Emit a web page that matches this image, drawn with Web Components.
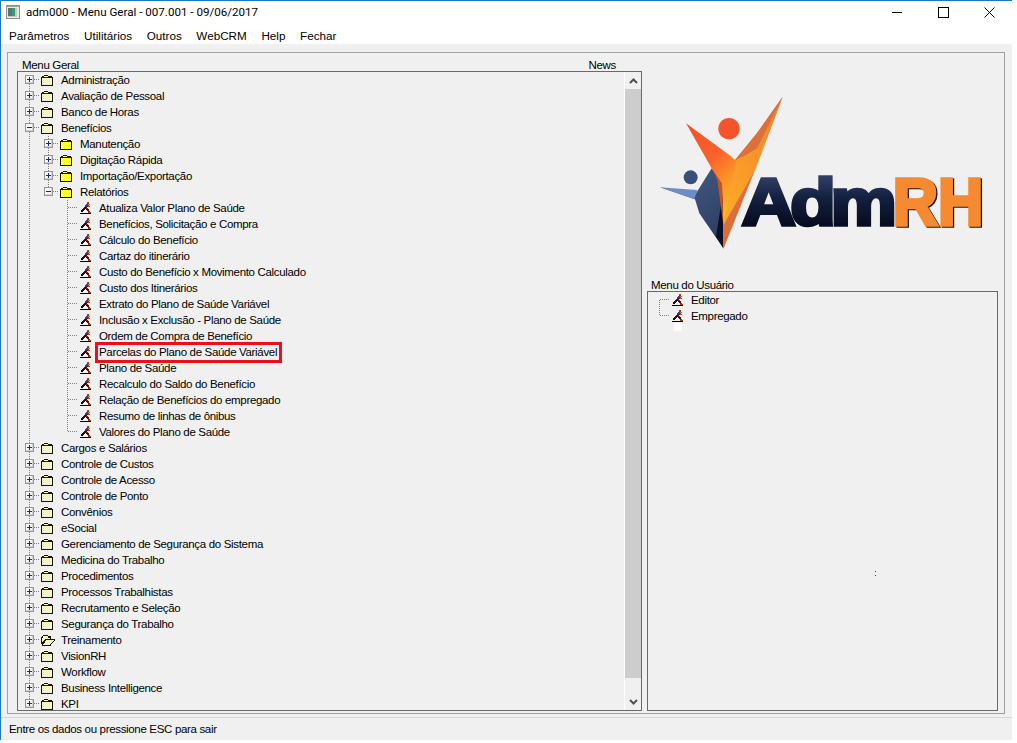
<!DOCTYPE html>
<html>
<head>
<meta charset="utf-8">
<title>adm000</title>
<style>
  html, body { margin: 0; padding: 0; background: #fff; }
  body { font: 11.5px "Liberation Sans", Arial, sans-serif; letter-spacing: -0.33px; color: #000; }
</style>
</head>
<body>
<app-window>
  <title-bar slot="title" text="adm000 - Menu Geral - 007.001 - 09/06/2017"></title-bar>
  <menu-bar slot="menu" items="Parâmetros,Utilitários,Outros,WebCRM,Help,Fechar"></menu-bar>
  <tree-view slot="tree" id="menuGeral"></tree-view>
  <adm-logo slot="logo"></adm-logo>
  <user-panel slot="user"></user-panel>
  <status-bar slot="status">Entre os dados ou pressione ESC para sair</status-bar>
</app-window>

<script>
// pixel runner: [y, x, width, colour]
const RUNNER_PIXELS = [
  [0, 7, 2, '#c03818'], [1, 7, 2, '#a83010'],
  [2, 6, 2, '#2040c0'], [2, 8, 2, '#e07020'],
  [3, 5, 3, '#2040b0'], [3, 8, 1, '#804020'],
  [4, 5, 3, '#182c88'], [4, 8, 2, '#d04818'],
  [5, 4, 3, '#181040'],
  [6, 3, 3, '#301010'], [6, 6, 2, '#801c10'],
  [7, 2, 3, '#301010'], [7, 6, 3, '#401010'],
  [8, 1, 3, '#201010'], [8, 7, 2, '#301010'],
  [9, 1, 2, '#000000'], [9, 8, 2, '#802010'],
  [10, 8, 3, '#a04018'],
  [11, 0, 11, '#000000']
];
const RUNNER = `<svg width="12" height="14" viewBox="0 0 12 14" shape-rendering="crispEdges" style="margin-left:1px">` +
  RUNNER_PIXELS.map(p => `<rect x="${p[1]}" y="${p[0] + 1}" width="${p[2]}" height="1" fill="${p[3]}"/>`).join('') +
  `</svg>`;

const FOLDER = `<svg width="12" height="11" viewBox="0 0 12 11" shape-rendering="crispEdges">
  <defs><pattern id="dither" width="2" height="2" patternUnits="userSpaceOnUse">
    <rect width="2" height="2" fill="#ffff30"/>
    <rect width="1" height="1" fill="#ffffd8"/><rect x="1" y="1" width="1" height="1" fill="#ffffd8"/>
  </pattern></defs>
  <path d="M3 0h4v1h4v1h1v9H0V2h1V1h2z" fill="#181800"/>
  <rect x="1" y="3" width="10" height="7" fill="url(#dither)"/>
  <rect x="3" y="1" width="4" height="1" fill="#ffffa0"/>
</svg>`;

const FOLDER_OPEN = `<svg width="14" height="11" viewBox="0 0 14 11" shape-rendering="crispEdges">
  <defs><pattern id="dither2" width="2" height="2" patternUnits="userSpaceOnUse">
    <rect width="2" height="2" fill="#ffff30"/>
    <rect width="1" height="1" fill="#ffffd8"/><rect x="1" y="1" width="1" height="1" fill="#ffffd8"/>
  </pattern></defs>
  <path d="M2 0h5v1h3v3h4v2h-1v1h-1v1h-1v1h-1v2H1V9H0V2h1V1h1z" fill="#181800"/>
  <rect x="2" y="1" width="5" height="2" fill="#ffffa0"/>
  <rect x="1" y="3" width="8" height="1" fill="url(#dither2)"/>
  <path d="M1 4h3v1H3v1H2v1H1z" fill="url(#dither2)"/>
  <path d="M5 5h8v1h-1v1h-1v1h-1v1H9v1H2V9h1V8h1V6h1z" fill="url(#dither2)"/>
</svg>`;

const CONNECTOR_STYLE = 'stroke="#808080" stroke-dasharray="1 1" shape-rendering="crispEdges"';

// one 19px column of the tree: vertical dots, branch and the +/- box
function connector(pos, box) {
  const top = pos === 'first' ? 8 : 0;
  const bottom = pos === 'last' ? 8 : 16;
  let s = `<svg width="19" height="16" viewBox="0 0 19 16" style="overflow:visible">`;
  s += `<line x1="11.5" y1="${top}" x2="11.5" y2="${bottom}" ${CONNECTOR_STYLE}/>`;
  s += `<line x1="12" y1="7.5" x2="22" y2="7.5" ${CONNECTOR_STYLE}/>`;
  if (box) {
    s += `<g shape-rendering="crispEdges"><rect x="7.5" y="3.5" width="8" height="8" fill="#f6f6f6" stroke="#969696"/>`;
    s += `<rect x="8" y="10" width="7" height="1" fill="#d4d4d4"/><rect x="14" y="4" width="1" height="7" fill="#d4d4d4"/>`;
    s += `<rect x="9" y="7" width="5" height="1" fill="#14249a"/>`;
    if (box === 'plus') s += `<rect x="11" y="5" width="1" height="5" fill="#14249a"/>`;
    s += `</g>`;
  }
  return s + `</svg>`;
}

function guide() {
  return `<svg width="19" height="16" viewBox="0 0 19 16"><line x1="11.5" y1="0" x2="11.5" y2="16" ${CONNECTOR_STYLE}/></svg>`;
}

function blank() {
  return `<svg width="19" height="16" viewBox="0 0 19 16"></svg>`;
}

const rowTemplate = document.createElement('template');
rowTemplate.innerHTML = `
  <style>
    :host { display: block; height: 16px; }
    .row { display: flex; align-items: center; height: 16px; white-space: nowrap; }
    .cols { display: flex; height: 16px; }
    svg { display: block; flex: none; }
    .icon { width: 19px; margin-left: 4px; flex: none; display: flex; align-items: center; height: 16px; }
    .label { line-height: 16px; margin-left: 1px; }
    :host([marked]) .label { outline: 3px solid #e8101c; padding: 0 2px 0 1px; margin-left: 0; height: 15px; line-height: 15px; align-self: flex-start; margin-top: 1px; }
  </style>
  <div class="row"><div class="cols"></div><div class="icon"></div><span class="label"><slot></slot></span></div>
`;

class TreeRow extends HTMLElement {
  constructor() {
    super();
    this.attachShadow({ mode: 'open' });
    this.shadowRoot.appendChild(rowTemplate.content.cloneNode(true));
  }

  connectedCallback() {
    const cols = (this.getAttribute('guides') || '').split('').map(c => c === '1' ? guide() : blank()).join('');
    const kind = this.getAttribute('kind');
    this.shadowRoot.querySelector('.cols').innerHTML = cols + connector(this.getAttribute('pos'), this.getAttribute('box'));
    const icons = { folder: FOLDER, open: FOLDER_OPEN, run: RUNNER };
    this.shadowRoot.querySelector('.icon').innerHTML = icons[kind];
  }
}
customElements.define('tree-row', TreeRow);

const MENU = [
  ['Administração', 0, 'plus'], ['Avaliação de Pessoal', 0, 'plus'], ['Banco de Horas', 0, 'plus'],
  ['Benefícios', 0, 'minus'],
  ['Manutenção', 1, 'plus'], ['Digitação Rápida', 1, 'plus'], ['Importação/Exportação', 1, 'plus'], ['Relatórios', 1, 'minus'],
  ['Atualiza Valor Plano de Saúde', 2], ['Benefícios, Solicitação e Compra', 2], ['Cálculo do Benefício', 2],
  ['Cartaz do itinerário', 2], ['Custo do Benefício x Movimento Calculado', 2], ['Custo dos Itinerários', 2],
  ['Extrato do Plano de Saúde Variável', 2], ['Inclusão x Exclusão - Plano de Saúde', 2], ['Ordem de Compra de Benefício', 2],
  ['Parcelas do Plano de Saúde Variável', 2], ['Plano de Saúde', 2], ['Recalculo do Saldo do Benefício', 2],
  ['Relação de Benefícios do empregado', 2], ['Resumo de linhas de ônibus', 2], ['Valores do Plano de Saúde', 2],
  ['Cargos e Salários', 0, 'plus'], ['Controle de Custos', 0, 'plus'], ['Controle de Acesso', 0, 'plus'],
  ['Controle de Ponto', 0, 'plus'], ['Convênios', 0, 'plus'], ['eSocial', 0, 'plus'],
  ['Gerenciamento de Segurança do Sistema', 0, 'plus'], ['Medicina do Trabalho', 0, 'plus'], ['Procedimentos', 0, 'plus'],
  ['Processos Trabalhistas', 0, 'plus'], ['Recrutamento e Seleção', 0, 'plus'], ['Segurança do Trabalho', 0, 'plus'],
  ['Treinamento', 0, 'plus'], ['VisionRH', 0, 'plus'], ['Workflow', 0, 'plus'], ['Business Intelligence', 0, 'plus'], ['KPI', 0, 'plus']
];

const treeTemplate = document.createElement('template');
treeTemplate.innerHTML = `
  <style>
    :host { display: flex; height: 100%; overflow: hidden; }
    .rows { flex: 1; min-width: 0; overflow: hidden; }
    .bar { width: 16px; flex: none; border-left: 1px solid #fff; display: flex; flex-direction: column; }
    .btn { height: 17px; flex: none; display: flex; align-items: center; justify-content: center; }
    .btn.down { height: 32px; align-items: flex-end; padding-bottom: 5px; box-sizing: border-box; }
    .thumb { flex: 1; background: #cdcdcd; }
    svg { display: block; }
  </style>
  <div class="rows"><slot></slot></div>
  <div class="bar">
    <div class="btn"><svg width="9" height="6" viewBox="0 0 9 6"><path d="M1 5l3.5-3.5L8 5" fill="none" stroke="#505050" stroke-width="2"/></svg></div>
    <div class="thumb"></div>
    <div class="btn down"><svg width="9" height="6" viewBox="0 0 9 6"><path d="M1 1l3.5 3.5L8 1" fill="none" stroke="#505050" stroke-width="2"/></svg></div>
  </div>
`;

class TreeView extends HTMLElement {
  constructor() {
    super();
    this.attachShadow({ mode: 'open' });
    this.shadowRoot.appendChild(treeTemplate.content.cloneNode(true));
  }

  connectedCallback() {
    MENU.forEach((item, i) => {
      const [label, level, box] = item;
      const next = MENU[i + 1];
      const row = document.createElement('tree-row');
      let pos = 'mid';
      if (i === 0) pos = 'first';
      if (!next) pos = 'last';
      // last child of its branch: nothing of that level follows before a shallower row
      if (level > 0 && (!next || next[1] < level)) pos = 'last';
      if (label === 'Relatórios') pos = 'last';
      let guides = '';
      if (level >= 1) guides += '1';
      if (level >= 2) guides += '0';
      row.setAttribute('guides', guides);
      row.setAttribute('pos', pos);
      if (box) row.setAttribute('box', box);
      row.setAttribute('kind', level === 2 ? 'run' : (label === 'Treinamento' ? 'open' : 'folder'));
      if (label.startsWith('Parcelas')) row.setAttribute('marked', '');
      row.textContent = label;
      this.appendChild(row);
    });
  }
}
customElements.define('tree-view', TreeView);

class TitleBar extends HTMLElement {
  constructor() {
    super();
    this.attachShadow({ mode: 'open' }).innerHTML = `
      <style>
        :host { display: flex; align-items: center; height: 24px; padding-bottom: 2px; box-sizing: border-box; background: #fff; font: 11.6px Roboto, sans-serif; letter-spacing: 0; }
        .ico { margin-left: 5px; margin-right: 6px; display: block; flex: none; }
        .txt { flex: 1; }
        .ctl { display: flex; flex: none; }
        .ctl svg { display: block; }
        .ctl div { width: 46px; height: 22px; display: flex; align-items: center; justify-content: center; }
      </style>
      <svg class="ico" width="14" height="14" viewBox="0 0 14 14" shape-rendering="crispEdges">
        <rect width="13" height="13" x="0.5" y="0.5" fill="#e8e8e8" stroke="#909090"/>
        <rect x="2" y="3" width="9" height="9" fill="#c0c8c8"/>
        <rect x="2" y="3" width="4" height="8" fill="#507878"/>
        <rect x="6" y="3" width="3" height="8" fill="#3a9a70"/>
        <rect x="1" y="1" width="12" height="1" fill="#a0a0a0"/>
      </svg>
      <span class="txt">${this.getAttribute('text')}</span>
      <div class="ctl">
        <div><svg width="10" height="10"><rect y="5" width="10" height="1" fill="#000"/></svg></div>
        <div><svg width="11" height="11"><rect x="0.5" y="0.5" width="10" height="10" fill="none" stroke="#000"/></svg></div>
        <div><svg width="11" height="11"><path d="M0.5 0.5l10 10M10.5 0.5l-10 10" stroke="#000" stroke-width="1" fill="none"/></svg></div>
      </div>`;
  }
}
customElements.define('title-bar', TitleBar);

class MenuBar extends HTMLElement {
  constructor() {
    super();
    const items = this.getAttribute('items').split(',').map(t => `<span>${t}</span>`).join('');
    this.attachShadow({ mode: 'open' }).innerHTML = `
      <style>
        :host { display: flex; align-items: center; gap: 14.6px; height: 19px; padding-top: 2px; box-sizing: border-box; background: #fff; padding-left: 8px; font: 11.7px "Liberation Sans", sans-serif; letter-spacing: 0; }
      </style>${items}`;
  }
}
customElements.define('menu-bar', MenuBar);

class StatusBar extends HTMLElement {
  constructor() {
    super();
    this.attachShadow({ mode: 'open' }).innerHTML = `
      <style>
        :host { display: flex; align-items: center; flex: 1; padding-left: 8px; border-top: 1px solid #d8d8d8; }
      </style><slot></slot>`;
  }
}
customElements.define('status-bar', StatusBar);

class UserPanel extends HTMLElement {
  constructor() {
    super();
    this.attachShadow({ mode: 'open' }).innerHTML = `
      <style>
        :host { display: block; position: relative; height: 100%; }
        .row { display: flex; align-items: center; height: 16px; }
        svg { display: block; flex: none; }
        .icon { margin-left: 4px; width: 19px; height: 16px; display: flex; align-items: center; flex: none; }
        .row span { margin-left: 1px; }
        .sq { width: 8px; height: 8px; background: #fff; margin: -1px 0 0 26px; }
        .speck { position: absolute; left: 227px; top: 279px; width: 1px; height: 5px; background: linear-gradient(#444 20%, transparent 20%, transparent 80%, #444 80%); }
      </style>
      <div class="row">${connector('first')}<div class="icon">${RUNNER}</div><span>Editor</span></div>
      <div class="row">${connector('last')}<div class="icon">${RUNNER}</div><span>Empregado</span></div>
      <div class="sq"></div>
      <div class="speck"></div>`;
  }
}
customElements.define('user-panel', UserPanel);

class AdmLogo extends HTMLElement {
  constructor() {
    super();
    this.attachShadow({ mode: 'open' }).innerHTML = `
      <style>
        :host { display: block; height: 100%; }
        svg { display: block; }
        text { font-family: "Liberation Sans", sans-serif; font-weight: 700; font-size: 198px; stroke-width: 11; }
      </style>
      <svg width="360" height="180" viewBox="0 0 1080 540" style="margin-top:27px;margin-left:-7px">
        <defs>
          <linearGradient id="v" x1="0.15" y1="0.1" x2="0.65" y2="0.85">
            <stop offset="0" stop-color="#f4502a"/><stop offset="0.42" stop-color="#f9622a"/>
            <stop offset="0.7" stop-color="#fb9a28"/><stop offset="1" stop-color="#fdc222"/>
          </linearGradient>
          <linearGradient id="arm" x1="1" y1="0" x2="0.2" y2="1">
            <stop offset="0" stop-color="#f08030"/><stop offset="1" stop-color="#fda825"/>
          </linearGradient>
          <linearGradient id="adm" gradientUnits="userSpaceOnUse" x1="0" y1="-150" x2="0" y2="0">
            <stop offset="0" stop-color="#33426a"/><stop offset="0.45" stop-color="#14203f"/><stop offset="1" stop-color="#070b22"/>
          </linearGradient>
          <linearGradient id="navy" x1="0" y1="0" x2="0.6" y2="1">
            <stop offset="0" stop-color="#47608c"/><stop offset="1" stop-color="#2f3f63"/>
          </linearGradient>
        </defs>
        <circle cx="152" cy="292" r="21" fill="#3a4e7a"/>
        <circle cx="267" cy="146" r="32" fill="#f4542c"/>
        <path d="M60 322L165 358L178 400L250 505L248 310L215 265L165 345Z" fill="url(#navy)"/>
        <path d="M60 322L172 330L163 358Z" fill="#6f8cc6"/>
        <path d="M228 470L250 505L250 330Z" fill="#0b1026"/>
        <path d="M138 130L272 228L285 240L350 160L428 50L345 270L250 435L246 312L215 265Z" fill="url(#v)"/>
        <path d="M428 50L355 155L285 240L318 225L352 205Z" fill="#d9703e"/>
        <path d="M428 50L352 205L318 225L290 240L250 435L345 270Z" fill="url(#arm)"/>
        <path d="M250 435L345 270L250 508Z" fill="#dd6e38"/>
        <path d="M215 265L246 312L250 435L232 300Z" fill="#c9502a"/>
        <text transform="translate(305 435) scale(1.13 1)" letter-spacing="-14" fill="url(#adm)" stroke="url(#adm)">Adm</text>
        <text transform="translate(762 439) scale(0.95 1)" letter-spacing="0" fill="#1a1208" stroke="#1a1208">RH</text>
        <text transform="translate(758 435) scale(0.95 1)" letter-spacing="0" fill="#f58a32" stroke="#f58a32">RH</text>
      </svg>`;
  }
}
customElements.define('adm-logo', AdmLogo);

const winTemplate = document.createElement('template');
winTemplate.innerHTML = `
  <style>
    :host { display: flex; flex-direction: column; width: 1011px; height: 739px; border-top: 1px solid #1a78c2; border-left: 1px solid #1a78c2; background: #f0f0f0; }
    .group { flex: none; height: 662px; margin: 8px 7px 0 6px; box-sizing: border-box; border: 1px solid #a0a0a0; padding: 0 7px 3px 9px; display: grid; grid-template-columns: 625px 351px; column-gap: 5px; }
    .col { display: flex; flex-direction: column; min-height: 0; }
    .cap { display: flex; justify-content: space-between; height: 18px; line-height: 24px; padding: 0 26px 0 5px; flex: none; }
    .box { border: 1px solid #696969; flex: none; box-sizing: border-box; overflow: hidden; }
    .logo { flex: none; height: 220px; }
    .gap { flex: none; height: 3px; }
  </style>
  <slot name="title"></slot>
  <slot name="menu"></slot>
  <div class="group">
    <div class="col">
      <div class="cap"><span>Menu Geral</span><span>News</span></div>
      <div class="box" style="height:640px"><slot name="tree"></slot></div>
    </div>
    <div class="col">
      <div class="logo"><slot name="logo"></slot></div>
      <div class="cap"><span style="margin-left:-1px">Menu do Usuário</span></div>
      <div class="box" style="height:420px"><slot name="user"></slot></div>
    </div>
  </div>
  <div class="gap"></div>
  <slot name="status"></slot>
`;

class AppWindow extends HTMLElement {
  constructor() {
    super();
    this.attachShadow({ mode: 'open' });
    this.shadowRoot.appendChild(winTemplate.content.cloneNode(true));
  }
}
customElements.define('app-window', AppWindow);
</script>
</body>
</html>
